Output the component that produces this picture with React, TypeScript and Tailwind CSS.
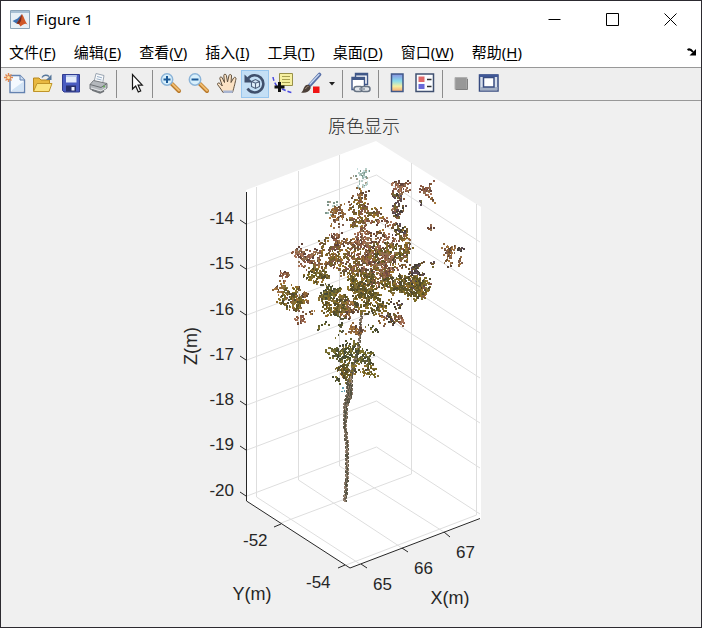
import { useMemo, type ReactNode } from 'react';
import clsx from 'clsx';

const menus = [
  ['文件', 'F'],
  ['编辑', 'E'],
  ['查看', 'V'],
  ['插入', 'I'],
  ['工具', 'T'],
  ['桌面', 'D'],
  ['窗口', 'W'],
  ['帮助', 'H'],
];

const zTicks = [
  { label: '-14', y: 224 },
  { label: '-15', y: 269 },
  { label: '-16', y: 315 },
  { label: '-17', y: 360 },
  { label: '-18', y: 405 },
  { label: '-19', y: 450 },
  { label: '-20', y: 496 },
];

const palettes: Record<string, string[]> = {
  pale: ['#9db8b0', '#b9cfc9', '#7d9488', '#a9a08c', '#c5dcdc'],
  brown: ['#8e6438', '#735230', '#a8783c', '#7e5c4c', '#9a7248', '#5e4636'],
  red: ['#905c48', '#724c40', '#a87458', '#835638', '#61433a', '#907050'],
  olive: ['#756824', '#8b742a', '#605626', '#806e3a', '#926e2c', '#504a30'],
  mixed: ['#806828', '#926440', '#725e2e', '#815648', '#9a742c', '#624e3c'],
  dark: ['#4e4040', '#5e4c4a', '#423e34', '#715630', '#5a4a54', '#706430'],
  green: ['#50522c', '#606030', '#464a36', '#746c30', '#585840', '#807430'],
  bark: ['#75685a', '#8d7a6a', '#5d5848', '#a08c7a', '#545242', '#7d7060'],
};

// x, y, radius x, radius y, number of points, palette
type Cluster = [number, number, number, number, number, string];

const clusters: Cluster[] = [
  [361, 180, 7, 9, 35, 'pale'],
  [366, 171, 3, 3, 8, 'pale'],
  [331, 207, 4, 6, 18, 'pale'],
  [362, 194, 5, 6, 26, 'brown'],
  [358, 206, 9, 8, 65, 'mixed'],
  [337, 217, 7, 11, 75, 'brown'],
  [335, 238, 4, 7, 28, 'red'],
  [403, 187, 8, 7, 40, 'red'],
  [398, 192, 5, 10, 44, 'red'],
  [397, 205, 5, 12, 54, 'dark'],
  [398, 212, 4, 5, 20, 'red'],
  [427, 190, 6, 7, 40, 'red'],
  [423, 203, 4, 2, 6, 'dark'],
  [433, 202, 3, 2, 5, 'brown'],
  [431, 227, 3, 4, 8, 'red'],
  [375, 215, 9, 7, 46, 'mixed'],
  [384, 223, 14, 3, 36, 'red'],
  [379, 235, 11, 3, 24, 'brown'],
  [401, 230, 7, 5, 44, 'dark'],
  [404, 244, 7, 14, 80, 'mixed'],
  [390, 240, 8, 6, 24, 'red'],
  [359, 221, 8, 9, 66, 'mixed'],
  [363, 238, 10, 8, 100, 'red'],
  [300, 256, 5, 12, 56, 'red'],
  [311, 256, 9, 8, 48, 'red'],
  [328, 253, 13, 12, 105, 'mixed'],
  [322, 266, 10, 6, 34, 'brown'],
  [346, 245, 12, 7, 56, 'brown'],
  [345, 265, 15, 12, 110, 'mixed'],
  [358, 262, 18, 16, 200, 'mixed'],
  [378, 261, 17, 17, 290, 'red'],
  [387, 252, 18, 12, 110, 'olive'],
  [398, 262, 9, 9, 40, 'mixed'],
  [362, 283, 14, 13, 250, 'olive'],
  [380, 279, 16, 11, 130, 'mixed'],
  [317, 276, 13, 8, 115, 'olive'],
  [284, 274, 3, 8, 22, 'red'],
  [280, 286, 5, 7, 28, 'brown'],
  [292, 298, 10, 12, 140, 'olive'],
  [300, 299, 9, 12, 80, 'brown'],
  [301, 319, 6, 3, 24, 'red'],
  [310, 314, 4, 4, 8, 'brown'],
  [334, 302, 15, 12, 260, 'olive'],
  [328, 292, 9, 6, 60, 'green'],
  [349, 308, 11, 9, 100, 'brown'],
  [363, 298, 9, 14, 110, 'olive'],
  [376, 304, 11, 11, 110, 'olive'],
  [383, 320, 5, 6, 18, 'brown'],
  [414, 287, 16, 10, 220, 'olive'],
  [413, 278, 9, 14, 120, 'dark'],
  [395, 284, 13, 9, 100, 'olive'],
  [424, 288, 7, 9, 48, 'mixed'],
  [421, 263, 5, 2, 9, 'dark'],
  [437, 262, 5, 5, 6, 'dark'],
  [451, 257, 5, 10, 56, 'brown'],
  [459, 249, 5, 1, 10, 'dark'],
  [459, 263, 2, 4, 10, 'brown'],
  [391, 317, 5, 5, 28, 'dark'],
  [398, 320, 6, 5, 34, 'red'],
  [397, 306, 5, 4, 14, 'dark'],
  [355, 330, 8, 4, 56, 'brown'],
  [373, 330, 4, 3, 12, 'green'],
  [341, 325, 1, 11, 20, 'green'],
  [323, 327, 4, 5, 9, 'green'],
  [351, 354, 14, 11, 150, 'green'],
  [336, 355, 8, 6, 40, 'green'],
  [347, 371, 9, 8, 95, 'olive'],
  [369, 371, 8, 6, 44, 'olive'],
  [368, 357, 9, 7, 44, 'green'],
  [336, 376, 5, 4, 9, 'green'],
];

// x, y, width
type Segment = [number, number, number];

const trunk: Segment[] = [
  [349, 380, 5],
  [349, 392, 6],
  [345, 405, 4],
  [344, 420, 3],
  [346, 440, 3],
  [346, 460, 3],
  [346, 480, 3],
  [344, 501, 2],
];

const branch: Segment[] = [
  [361, 310, 2],
  [359, 335, 1],
  [357, 350, 2],
  [349, 380, 4],
];

function createRandom(seed: number) {
  let s = seed;
  return () => {
    s = (s * 1664525 + 1013904223) % 4294967296;
    return s / 4294967296;
  };
}

function buildCloud() {
  const random = createRandom(42);
  const paths: Record<string, string> = {};

  const add = (x: number, y: number, palette: string, w = 2) => {
    const colors = palettes[palette];
    const color = colors[Math.floor(random() * colors.length)];
    paths[color] =
      (paths[color] ?? '') + `M${Math.round(x)} ${Math.round(y)}h${w}v2h-${w}z`;
  };

  // stem first, so that the leaves cover it
  for (const line of [branch, trunk]) {
    for (let i = 0; i < line.length - 1; i++) {
      const [x1, y1, w1] = line[i];
      const [x2, y2, w2] = line[i + 1];
      for (let y = y1; y < y2; y++) {
        const t = (y - y1) / (y2 - y1);
        const w = w1 + (w2 - w1) * t;
        const x = x1 + (x2 - x1) * t;
        for (let k = 0; k < w; k++) {
          add(x - w / 2 + k + (y % 4 < 2 ? 1 : 0), y, 'bark', 1);
        }
      }
    }
  }

  for (const [cx, cy, rx, ry, n, palette] of clusters) {
    // short twigs of three points each
    for (let i = 0; i < n; i += 3) {
      const angle = random() * Math.PI * 2;
      const r = Math.sqrt(random());
      let x = cx - 1 + Math.cos(angle) * rx * r;
      let y = cy - 1 + Math.sin(angle) * ry * r;
      for (let k = 0; k < 3 && i + k < n; k++) {
        add(x, y, palette, random() < 0.85 ? 2 : 1);
        x += (random() - 0.5) * 7;
        y += (random() - 0.5) * 6;
      }
    }
  }

  return Object.entries(paths);
}

function PointCloud() {
  const cloud = useMemo(buildCloud, []);

  return (
    <g shapeRendering="crispEdges">
      {cloud.map(([color, d]) => (
        <path key={color} d={d} fill={color} />
      ))}
      <path d="M342 387h2v2h-2zM344 390h1v2h-1zM341 391h2v1h-2z" fill="#5f9fb0" />
    </g>
  );
}

function Plot() {
  return (
    <svg
      viewBox="1 101 700 526"
      className="block w-full flex-1"
      role="img"
      aria-label="原色显示"
      fontFamily="'Liberation Sans', 'Noto Sans CJK SC', sans-serif"
      fill="#262626"
    >
      <path d="M246 190L376 141L481 207V519L350 568L246 501Z" fill="#fff" />

      {/* grid */}
      <g fill="none" stroke="#dedede">
        {zTicks.map(({ label, y }) => (
          <path key={label} d={`M247 ${y}L376.5 ${y - 49}L480 ${y + 18}`} />
        ))}
        <path d="M256.5 187V497L360 564M298.5 171V480L402 548M339.5 155V466L444 532" />
        <path d="M411.5 163V474L281 523M476.5 204V515L346 565" />
      </g>

      <PointCloud />

      {/* axes and ticks */}
      <g fill="none" stroke="#262626">
        <path d="M246.5 192V501L350 568L480 518.5" />
        {zTicks.map(({ label, y }) => (
          <path key={label} d={`M240 ${y - 4}L246 ${y}`} />
        ))}
        <path d="M274 527L281 524M338 568L345 565" />
        <path d="M361 564L367 568M402 548L408 552M444 532L450 537" />
      </g>

      <g fontSize="17">
        {zTicks.map(({ label, y }) => (
          <text key={label} x="234" y={y} textAnchor="end">
            {label}
          </text>
        ))}
        <text x="243" y="546">-52</text>
        <text x="306" y="588">-54</text>
        <text x="373" y="590">65</text>
        <text x="414" y="574">66</text>
        <text x="456" y="558">67</text>
      </g>

      <g fontSize="18" textAnchor="middle">
        <text x="364" y="133" fontWeight="300">原色显示</text>
        <text x="252" y="600">Y(m)</text>
        <text x="450" y="604">X(m)</text>
        <text transform="translate(197 346) rotate(-90)">Z(m)</text>
      </g>
    </svg>
  );
}

function Icon({ children }: { children: ReactNode }) {
  return (
    <svg width="24" height="24" viewBox="0 0 24 24" fill="none" aria-hidden="true">
      {children}
    </svg>
  );
}

function ToolButton({
  label,
  active,
  children,
}: {
  label: string;
  active?: boolean;
  children: ReactNode;
}) {
  return (
    <button
      type="button"
      aria-label={label}
      aria-pressed={active}
      className={clsx(
        'flex size-7 shrink-0 items-center justify-center',
        active && 'border border-[#98c6ee] bg-[#c4dff5]',
      )}
    >
      <Icon>{children}</Icon>
    </button>
  );
}

function Separator() {
  return <div className="mr-1 ml-[3px] h-7 w-px shrink-0 bg-[#8c8c8c]" />;
}

function Magnifier({ plus }: { plus?: boolean }) {
  return (
    <>
      <path d="M13 12L20 19" stroke="#b87828" strokeWidth="4" strokeLinecap="round" />
      <path d="M13.5 12L20 18.5" stroke="#f0bc70" strokeWidth="2" strokeLinecap="round" />
      <circle cx="8" cy="7.5" r="5.7" fill="#d8f0fc" stroke="#8cb4d8" strokeWidth="1.5" />
      <path d="M4.5 7.5h7" stroke="#1c5a98" strokeWidth="2" />
      {plus && <path d="M8 4v7" stroke="#1c5a98" strokeWidth="2" />}
    </>
  );
}

function Toolbar() {
  return (
    <div
      role="toolbar"
      className="flex h-[33px] items-center overflow-hidden border-b border-[#989898] bg-[#eeeeee]"
    >
      <ToolButton label="新建图窗">
        <path d="M7 3.5H17L21.5 8V20.5H7Z" fill="#f4f9ff" stroke="#6482b0" strokeWidth="1.4" />
        <path d="M9 18L20 10V19H9Z" fill="#d2e4f6" />
        <path d="M17 3.5V8H21.5" fill="#cfdff2" stroke="#6482b0" />
        <path
          d="M5.5 1V10M1 5.5H10M2.5 2.5L8.5 8.5M8.5 2.5L2.5 8.5"
          stroke="#e08850"
          strokeWidth="1.4"
        />
        <circle cx="5.5" cy="5.5" r="1.5" fill="#ffe0a0" />
      </ToolButton>
      <ToolButton label="打开文件">
        <path d="M2.5 19V6H8L10 8H18.5V19Z" fill="#e8b840" stroke="#b88820" />
        <path d="M2.5 19.5L6 11.5H21L18 19.5Z" fill="#fbe480" stroke="#c09428" />
        <path d="M11 5.5C12.5 3 16 2.5 18 4.5" stroke="#58789c" strokeWidth="1.4" />
        <path d="M20.5 2.5V8H15Z" fill="#58789c" />
      </ToolButton>
      <ToolButton label="保存图窗">
        <path d="M3.5 2.5H20.5V20H5L3.5 18.5Z" fill="#4a5cc0" stroke="#303c90" />
        <path d="M7 3H17.5V10.5H7Z" fill="#e4ecfa" />
        <path d="M7 3H17.5V5H7Z" fill="#b8c8ec" />
        <path d="M7 13.5H17V19.5H7Z" fill="#28306c" />
        <path d="M12.5 15H15.5V18.5H12.5Z" fill="#eef2ff" />
      </ToolButton>
      <ToolButton label="打印图窗">
        <path d="M7 10L9 1.5L17 3.5L15.5 12Z" fill="#f8fafc" stroke="#9aa4b0" />
        <path d="M10 4.5L15 5.8M9.5 6.8L14.5 8" stroke="#9ab0c8" />
        <path d="M3 12.5L6.500 8.5L20 11.5V16L14 20L3 17Z" fill="#b4b8bc" stroke="#787c80" />
        <path d="M3 12.5L14 15.5L20 11.5" stroke="#6c7074" />
        <path d="M4 16L14 19L19 16" stroke="#e4e6e8" />
        <path d="M5 18L13 21L17 19" stroke="#707478" strokeWidth="1.4" />
        <circle cx="17" cy="14.5" r="1" fill="#60b050" />
      </ToolButton>
      <Separator />
      <ToolButton label="编辑绘图">
        <path
          d="M9.5 2.5V17L12.700 14L15.300 20L17.700 19L15.100 13.200H19.300Z"
          fill="#fff"
          stroke="#181818"
          strokeWidth="1.2"
        />
      </ToolButton>
      <Separator />
      <ToolButton label="放大">
        <Magnifier plus />
      </ToolButton>
      <ToolButton label="缩小">
        <Magnifier />
      </ToolButton>
      <ToolButton label="平移">
        <path
          d="M8 20.5C6 17 4 14.5 2.5 12.5C2 11 4 10.5 5 11.5L7.3 14L4.8 6.5C4.5 4.8 6.7 4.3 7.3 6L9.5 10.5L8.8 3.5C8.8 1.8 11 1.8 11.4 3.5L12.5 10L14 3.5C14.5 1.8 16.7 2.3 16.5 4L16 10.5L18.6 6C19.5 4.5 21.6 5.5 20.9 7.2C20 11 19.5 14 17.5 20.5Z"
          fill="#fbe2c4"
          stroke="#60503c"
        />
        <path d="M8 18.5H18L17.5 21H8.5Z" fill="#a8b4d0" />
      </ToolButton>
      <ToolButton label="三维旋转" active>
        <path
          d="M5 6.5A8.6 8.6 0 1 1 4.5 16.5"
          stroke="#40506c"
          strokeWidth="2.6"
        />
        <path d="M1.5 2.5V10.5H10Z" fill="#40506c" />
        <path
          d="M8.5 9.5L12.5 7.5L16.5 9.5V14.5L12.5 16.5L8.5 14.5ZM8.5 9.5L12.5 11.2L16.5 9.5M12.5 11.2V16.5"
          fill="#e0effa"
          stroke="#50607c"
          strokeWidth="1.1"
        />
      </ToolButton>
      <ToolButton label="数据游标">
        <path
          d="M2 5C2.5 8 3.500 11 6 14M11 17C14 18 17 20 21 20.5"
          stroke="#4848e0"
          strokeWidth="1.5"
          strokeDasharray="4 2"
        />
        <path d="M8.5 1.5H21.5V13.5H8.5Z" fill="#f6f0a0" stroke="#989048" />
        <path d="M11 4.5H19M11 7.5H19M11 10.5H19" stroke="#a8a050" />
        <path d="M8.5 10V20M3.5 15H13.5" stroke="#101010" strokeWidth="3" />
      </ToolButton>
      <ToolButton label="刷亮数据">
        <path d="M11 13L20.5 2.5" stroke="#5870a8" strokeWidth="3.6" strokeLinecap="round" />
        <path d="M11 12L20 2.5" stroke="#c8d8f0" strokeWidth="1.3" strokeLinecap="round" />
        <path
          d="M2 20.5C4.5 19.5 4 16 6.5 13.5C8.5 11.5 12.5 13.5 11.5 16.5C10 20.5 5.5 21.5 2 20.5Z"
          fill="#4c4038"
        />
        <path d="M6.5 17C7 15.5 8 14.5 9.5 14.5" stroke="#a49080" />
        <path d="M14 14.5H20.5V21H14Z" fill="#f01414" />
      </ToolButton>
      <button
        type="button"
        aria-label="刷亮选项"
        className="flex h-7 w-[14px] shrink-0 items-center justify-center"
      >
        <svg width="6" height="4" viewBox="0 0 6 4" aria-hidden="true">
          <path d="M0 0H6L3 3.5Z" fill="#202020" />
        </svg>
      </button>
      <Separator />
      <ToolButton label="链接绘图">
        <path d="M6.5 1.5H18.500V12.5H6.5Z" fill="#fff" stroke="#405888" strokeWidth="1.4" />
        <path d="M6.5 1.5H18.5V3.5H6.5Z" fill="#405888" />
        <path d="M3 5.5H15.5V17.5H3Z" fill="#fff" stroke="#405888" strokeWidth="1.4" />
        <path d="M3 5.5H15.5V8H3Z" fill="#405888" />
        <rect x="5" y="14.5" width="9" height="5" rx="2.5" fill="#e4e8ec" stroke="#687484" strokeWidth="1.5" />
        <rect x="12" y="14.5" width="9" height="5" rx="2.5" fill="#e4e8ec" stroke="#687484" strokeWidth="1.5" />
        <path d="M10 17H16" stroke="#8a96a4" strokeWidth="1.5" />
      </ToolButton>
      <Separator />
      <ToolButton label="插入颜色栏">
        <defs>
          <linearGradient id="colorbar" x1="0" y1="0" x2="0" y2="1">
            <stop offset="0" stopColor="#8890e0" />
            <stop offset="0.4" stopColor="#88dcec" />
            <stop offset="0.7" stopColor="#f4f0a0" />
            <stop offset="1" stopColor="#f8a470" />
          </linearGradient>
        </defs>
        <path d="M6.5 2H18V19.5H6.5Z" fill="url(#colorbar)" stroke="#405888" strokeWidth="1.5" />
      </ToolButton>
      <ToolButton label="插入图例">
        <path d="M3 2H20.5V19.5H3Z" fill="#fafcff" stroke="#405070" strokeWidth="1.5" />
        <path d="M5.5 4.5H11.5V10H5.5Z" fill="#e06868" />
        <path d="M5.5 12H11.5V17H5.5Z" fill="#6868d8" />
        <path d="M14 7.5H18.5M14 14.5H18.5" stroke="#303030" strokeWidth="1.500" />
      </ToolButton>
      <Separator />
      <ToolButton label="隐藏绘图工具">
        <path d="M6 5.5H18V17.5H6Z" fill="#989898" stroke="#b0b0b0" />
        <path d="M7 17.5H18.5V7" stroke="#808080" />
      </ToolButton>
      <ToolButton label="显示绘图工具和停靠图窗">
        <path d="M2.5 3H21V19H2.500Z" fill="#d8e0ec" stroke="#384c80" strokeWidth="1.5" />
        <path d="M2.5 2.5H21V5H2.5Z" fill="#405898" />
        <path d="M3 15H20.5V18.5H3Z" fill="#a4b0c4" />
        <path d="M6.5 5.5H17V15H6.5Z" fill="#fff" stroke="#384c80" strokeWidth="1.5" />
      </ToolButton>
    </div>
  );
}

function TitleBar() {
  const control = 'flex w-[58px] items-center justify-center';

  return (
    <header className="flex h-[37px] items-stretch bg-white pr-0.5 pl-[9px]">
      <div className="flex flex-1 items-center gap-1.5">
        <svg width="20" height="19" viewBox="0 0 20 19" aria-hidden="true">
          <path d="M0.5 0.5H19.5V18.5H0.5Z" fill="#e8f0f6" stroke="#8ca4b8" />
          <path d="M1 1H19V3H1Z" fill="#a8c0d4" />
          <path d="M2.5 11L7.5 8.5L11.5 4.5L9.5 11L6.5 13.5Z" fill="#3c70b0" />
          <path
            d="M6.5 13.5L9 10L12 4C13.5 6 15 11 17.5 14.5C15.5 13 14 13.5 10.5 16.5C9.5 14.5 8.5 13.5 6.5 13.5Z"
            fill="#d05828"
          />
          <path d="M6.5 13.5L9 10L12 4L11 11L9 14Z" fill="#782c20" />
        </svg>
        <h1 className="pb-0.5 text-[15px] leading-5">Figure 1</h1>
      </div>
      <button type="button" aria-label="最小化" className={control}>
        <svg width="13" height="13" viewBox="0 0 13 13" stroke="#000" aria-hidden="true">
          <path d="M0.5 6.5H12.5" />
        </svg>
      </button>
      <button type="button" aria-label="最大化" className={control}>
        <svg width="13" height="13" viewBox="0 0 13 13" fill="none" stroke="#000" aria-hidden="true">
          <path d="M0.5 0.5H12.5V12.5H0.5Z" />
        </svg>
      </button>
      <button type="button" aria-label="关闭" className={control}>
        <svg width="13" height="13" viewBox="0 0 13 13" stroke="#000" aria-hidden="true">
          <path d="M0.5 0.5L12.5 12.5M12.5 0.5L0.5 12.5" />
        </svg>
      </button>
    </header>
  );
}

function MenuBar() {
  return (
    <nav className="flex h-[30px] items-center justify-between border-b border-[#989898] bg-white pr-1 pb-0.5 pl-2">
      <div className="flex gap-[18px]">
        {menus.map(([name, key]) => (
          <button key={key} type="button" className="text-[15px] leading-5 whitespace-nowrap">
            {name}(<u className="underline-offset-2">{key}</u>)
          </button>
        ))}
      </div>
      <button type="button" aria-label="停靠图窗">
        <svg width="10" height="8" viewBox="0 0 10 8" aria-hidden="true">
          <path d="M0.5 2C2.5 0.5 4 1.5 6 4" fill="none" stroke="#000" strokeWidth="2" />
          <path d="M9 1V7.5H2.5Z" fill="#000" />
        </svg>
      </button>
    </nav>
  );
}

export default function App() {
  return (
    <div className="flex min-h-screen flex-col border border-[#2c2a30] bg-[#f0f0f0] font-['Noto_Sans','Noto_Sans_CJK_SC',sans-serif] text-black">
      <TitleBar />
      <MenuBar />
      <Toolbar />
      <main className="flex flex-1 flex-col">
        <Plot />
      </main>
    </div>
  );
}
